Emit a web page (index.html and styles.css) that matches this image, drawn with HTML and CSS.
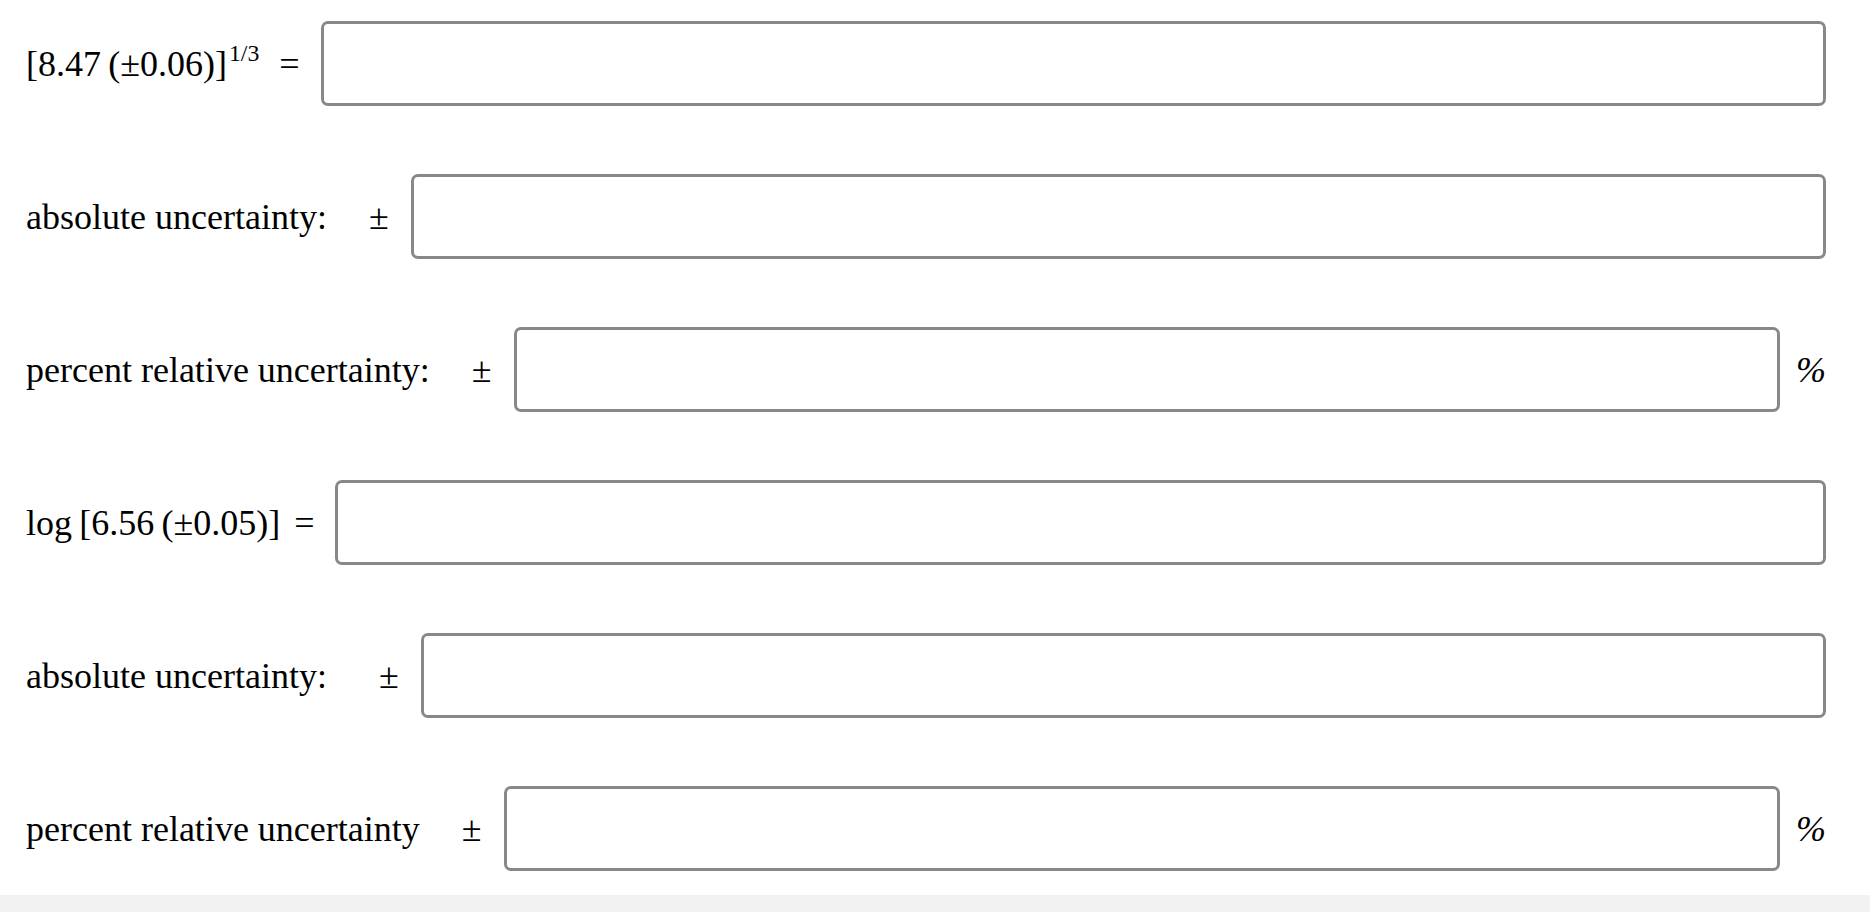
FILE: index.html
```html
<!DOCTYPE html>
<html lang="en">
<head>
  <meta charset="UTF-8">
  <title>Uncertainty</title>
  <link rel="stylesheet" href="styles.css">
</head>
<body>
  <div class="sheet">
    <div class="row">
      <span class="expr">[8.47&#8201;(&plusmn;0.06)]<sup>1/3</sup></span>
      <span class="eq">=</span>
      <input type="text" class="answer">
    </div>

    <div class="row">
      <span class="label">absolute uncertainty:</span>
      <span class="pm">&plusmn;</span>
      <input type="text" class="answer">
    </div>

    <div class="row">
      <span class="label">percent relative uncertainty:</span>
      <span class="pm">&plusmn;</span>
      <input type="text" class="answer">
      <span class="unit">%</span>
    </div>

    <div class="row">
      <span class="expr">log&#8201;[6.56&#8201;(&plusmn;0.05)]</span>
      <span class="eq">=</span>
      <input type="text" class="answer">
    </div>

    <div class="row">
      <span class="label">absolute uncertainty:</span>
      <span class="pm pm-wide">&plusmn;</span>
      <input type="text" class="answer">
    </div>

    <div class="row">
      <span class="label">percent relative uncertainty</span>
      <span class="pm">&plusmn;</span>
      <input type="text" class="answer">
      <span class="unit">%</span>
    </div>
  </div>
</body>
</html>
```

FILE: styles.css
```css
body {
  margin: 0;
  background-color: #f2f2f2;
  font-family: "Liberation Serif", "Times New Roman", serif;
  color: #000;
}
.sheet {
  background-color: #fff;
  height: 895px;
  box-sizing: border-box;
  padding: 21px 44px 0 26px;
  display: flex;
  flex-direction: column;
  gap: 68px;
  box-shadow: 0 1px 3px rgba(0, 0, 0, 0.3);
}
.row {
  display: flex;
  align-items: center;
  height: 85px;
  font-size: 36px;
}
.expr sup {
  font-size: 66%;
  vertical-align: 0.62em;
  line-height: 0;
  margin-left: 2px;
  margin-right: 6px;
}
.eq {
  margin-left: 14px;
  margin-right: 21px;
}
.pm {
  margin-left: 42px;
  margin-right: 22px;
}
.pm-wide {
  margin-left: 52px;
}
.answer {
  flex: 1;
  height: 85px;
  box-sizing: border-box;
  border: 3px solid #888;
  border-radius: 7px;
  background: #fff;
  padding: 0 10px;
  font-size: 28px;
  font-family: inherit;
  outline: none;
}
.unit {
  width: 46px;
  text-align: right;
  font-style: italic;
}
```
